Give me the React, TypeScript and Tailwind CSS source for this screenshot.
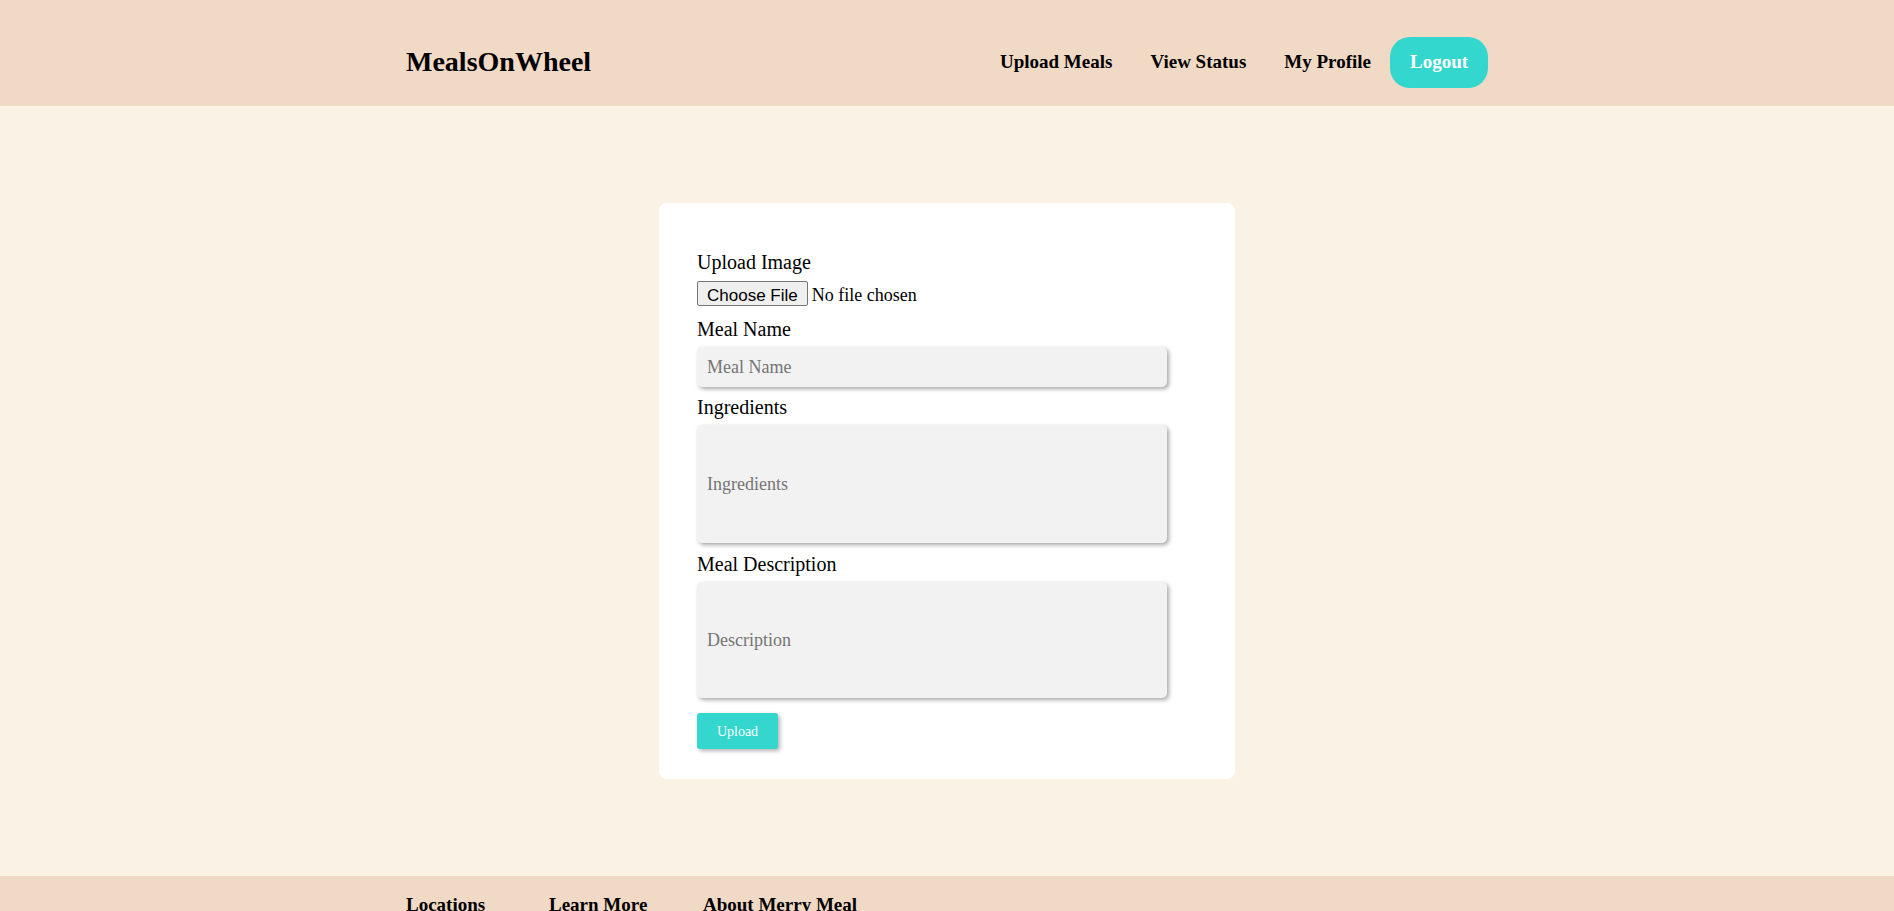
import React, { useState } from "react";

const navLinks = ["Upload Meals", "View Status", "My Profile"];
const footerLinks = [
  { label: "Locations", width: "w-[143px]" },
  { label: "Learn More", width: "w-[154px]" },
  { label: "About Merry Meal", width: "w-auto" },
];

const inputClass =
  "block w-[470px] rounded-[5px] bg-[#f2f2f2] pl-[10px] text-[18px] text-black placeholder:text-[#757575] shadow-[2px_2px_4px_rgba(0,0,0,0.35)] outline-none";

const labelClass = "mb-[7px] block text-[20px] leading-[22px]";

const App: React.FC = () => {
  const [mealName, setMealName] = useState("");
  const [ingredients, setIngredients] = useState("");
  const [description, setDescription] = useState("");

  return (
    <div className="min-h-screen bg-[#faf3e5] font-['Liberation_Serif',serif] text-black">
      {/* header */}
      <header className="h-[106px] bg-[#f0d9c5] pt-[18px]">
        <div className="mx-auto flex h-[88px] w-[1082px] items-center justify-between">
          <h1 className="text-[28px] font-bold">MealsOnWheel</h1>
          <nav className="flex items-center">
            {navLinks.map((link) => (
              <a key={link} href="#" className="px-[19px] text-[19px] font-bold">
                {link}
              </a>
            ))}
            <button className="h-[51px] w-[98px] rounded-[20px] bg-[#33d7cd] text-[19px] font-bold text-white">
              Logout
            </button>
          </nav>
        </div>
      </header>

      {/* form card */}
      <main className="py-[97px]">
        <div className="mx-auto w-[576px] rounded-[8px] bg-white pb-[30px] pl-[38px] pt-[48px]">
          <form onSubmit={(e) => e.preventDefault()}>
            <label className="mb-[8px] block text-[20px] leading-[22px]">Upload Image</label>
            <input
              type="file"
              className="mb-[10px] block h-[27px] text-[18px] leading-[27px] file:mr-[4px] file:h-[25px] file:rounded-[2px] file:border file:border-solid file:border-[#767676] file:bg-[#efefef] file:px-[9px] file:font-['Liberation_Sans',sans-serif] file:text-[17px] file:text-black"
            />

            <label className={labelClass}>Meal Name</label>
            <input
              type="text"
              placeholder="Meal Name"
              value={mealName}
              onChange={(e) => setMealName(e.target.value)}
              className={`${inputClass} mb-[9px] h-[40px]`}
            />

            <label className={labelClass}>Ingredients</label>
            <input
              type="text"
              placeholder="Ingredients"
              value={ingredients}
              onChange={(e) => setIngredients(e.target.value)}
              className={`${inputClass} mb-[10px] h-[118px]`}
            />

            <label className={labelClass}>Meal Description</label>
            <input
              type="text"
              placeholder="Description"
              value={description}
              onChange={(e) => setDescription(e.target.value)}
              className={`${inputClass} mb-[15px] h-[116px]`}
            />

            <button
              type="submit"
              className="h-[36px] w-[81px] rounded-[3px] bg-[#33d7cd] text-[14px] text-white shadow-[2px_2px_4px_rgba(0,0,0,0.3)]"
            >
              Upload
            </button>
          </form>
        </div>
      </main>

      {/* footer */}
      <footer className="bg-[#f0d9c5] pb-[40px] pt-[18px]">
        <div className="mx-auto flex w-[1082px]">
          {footerLinks.map((link) => (
            <a key={link.label} href="#" className={`${link.width} text-[19px] font-bold leading-[22px]`}>
              {link.label}
            </a>
          ))}
        </div>
      </footer>
    </div>
  );
};

export default App;
